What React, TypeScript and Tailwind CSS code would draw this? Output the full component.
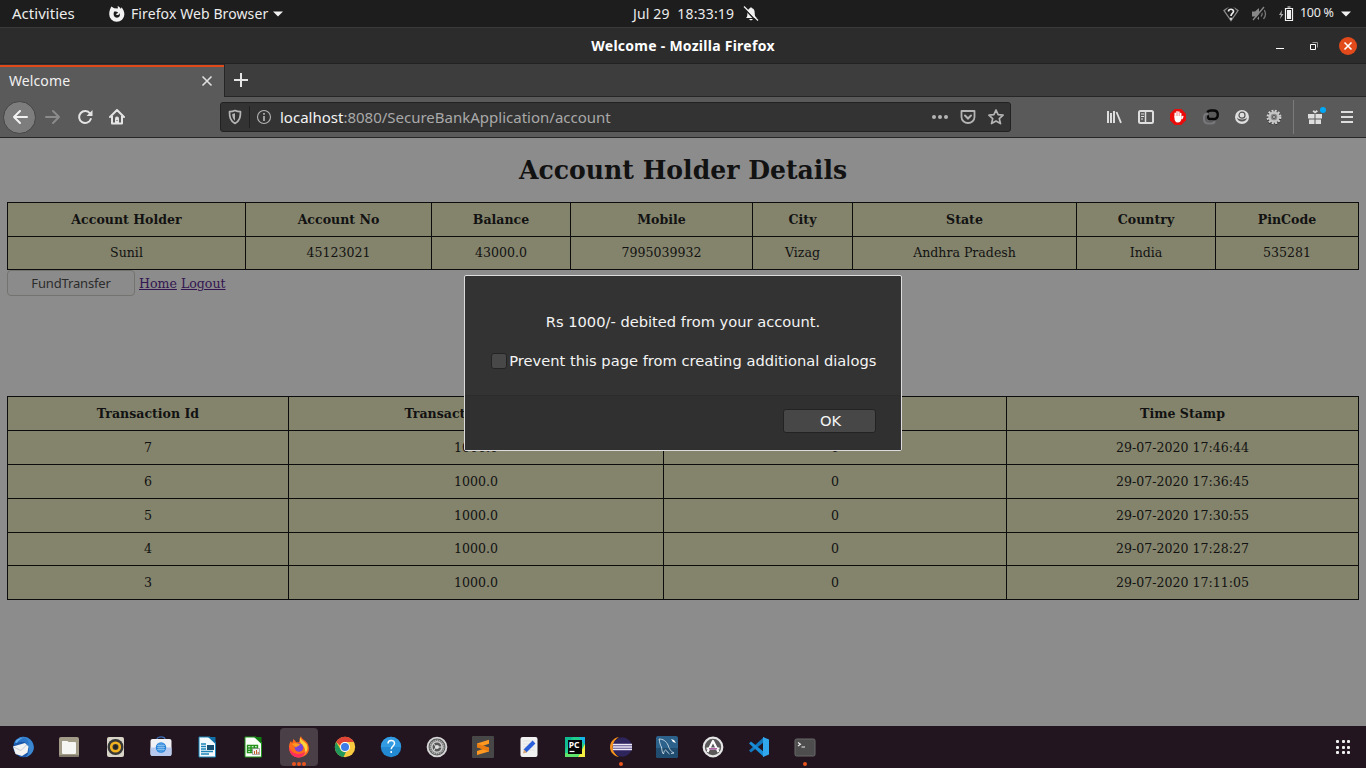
import React from "react";

type IconProps = { size?: number; box?: number; children: React.ReactNode; className?: string };

function Icon({ size = 16, box, children, className = "" }: IconProps) {
  const b = box ?? size;
  return (
    <svg width={size} height={size} viewBox={`0 0 ${b} ${b}`} fill="none" className={`shrink-0 ${className}`}>
      {children}
    </svg>
  );
}

function TopBar() {
  return (
    <header className="flex h-[28px] shrink-0 items-center border-b border-[#3a3a3a] bg-[#1d1d1d] text-[14px] text-[#ececec]">
      <div className="flex w-[633px] items-center">
        <span className="ml-3 w-[96px] text-[15px] tracking-[0.03px]">Activities</span>
        <Icon size={18}>
          <path d="M6.2 3.2 3.4 1.6C2.4 3.6 1.2 6 1.2 9a7.600 7.600 0 0 0 15.200.3c0-3-1.400-5.600-3.200-7.100l-.2 1.800C12 2.600 11.300 1.300 9.500.900c.5 1 .4 1.900.2 2.700z" fill="#f2f2f2" />
          <path d="M6 6.800c2-.8 2.500.4 4 .4-.2 1.200-1.500 1.300-2 2 .8 1.500 3.400 1.100 3.500-1.200 1.200 2.600-.3 4.700-2.500 4.700-2.600 0-4.100-2.400-3-5.900z" fill="#1d1d1d" />
        </Icon>
        <span className="ml-[5px] tracking-[0.1px]">Firefox Web Browser</span>
        <Icon size={10} className="ml-[5px]"><path d="M0 2.500h10L5 7.500z" fill="#f2f2f2" /></Icon>
      </div>
      <div className="flex w-[590px] items-center whitespace-pre">
        <span className="w-[102px] tracking-[0.16px]">Jul 29  18:33:19</span>
        <Icon size={16} className="ml-[8px]">
          <path d="M3 12c1.500-1.200 1.300-3 1.400-5C4.600 4 6 2.300 7.200 2 7.300.900 8.700.900 8.800 2 11 2.500 11.700 4.500 11.700 7c.1 2.500.3 3.800 2 5zM6.200 13h3.600c-.4 1.700-3.200 1.700-3.600 0z" fill="#f2f2f2" />
          <path d="m1 2 13 14" stroke="#1d1d1d" strokeWidth="1.500" />
          <path d="m1 .5 14 14" stroke="#f2f2f2" strokeWidth="1.200" />
        </Icon>
      </div>
      <div className="flex items-center text-[12.500px]">
        <Icon size={16}>
          <path d="M1 4.500c4-3.800 10-3.800 14 0L8 14.500z" stroke="#8a8a8a" strokeWidth="1.300" />
          <path d="M5.200 5.500C5.300 1.800 11 2 10.700 5.500 10.400 7.500 8 7.400 8 10" stroke="#1d1d1d" strokeWidth="4" />
          <path d="M5.500 5.500C5.500 2.500 10.700 2.500 10.500 5.500 10.300 7.500 8 7.400 8 10M8 11.800v2" stroke="#eee" strokeWidth="1.700" />
        </Icon>
        <Icon size={16} className="ml-[12px]">
          <path d="M1 5.500h3L8 2v12L4 10.500H1z" fill="#888" />
          <path d="M10 5.500c1.200 1.400 1.200 3.600 0 5M12.500 3c2.400 3 2.400 7 0 10" stroke="#777" strokeWidth="1.300" />
          <path d="m3 15 11-13" stroke="#1d1d1d" strokeWidth="1.500" /><path d="m2 14 11-13" stroke="#888" strokeWidth="1.300" />
        </Icon>
        <Icon size={16} className="ml-[11px]">
          <path d="M4 4 1 9h2l-1 4 3.500-5h-2z" fill="#aaa" />
          <path d="M7.500 2.500h7v12h-7zM9.500 1h3" stroke="#f2f2f2" strokeWidth="1.200" /><path d="M9 4h4v9H9z" fill="#f2f2f2" />
        </Icon>
        <span className="ml-[6px] w-[34px] whitespace-nowrap tracking-[-0.3px]">100 %</span>
        <Icon size={10} className="ml-[7px]"><path d="M0 2.500h10L5 7.500z" fill="#f2f2f2" /></Icon>
      </div>
    </header>
  );
}

function TitleBar() {
  return (
    <div className="grid h-[36px] shrink-0 grid-cols-[1fr_auto_1fr] items-center border-b border-[#222] bg-[#2c2c2c]">
      <span />
      <span className="text-[14px] font-bold tracking-[0.26px] text-white">Welcome - Mozilla Firefox</span>
      <div className="flex items-center justify-end pr-[9px]">
        <Icon size={10} className="mr-[24px]"><path d="M1 7h8v1H1z" fill="#fff" /></Icon>
        <Icon size={10} className="mr-[20px]">
          <path d="M3.500 1.500h5v5" stroke="#999" /><path d="M1.500 3.500h5v5h-5z" stroke="#fff" />
        </Icon>
        <Icon size={18}>
          <circle cx="9" cy="9" r="9" fill="#e24a1b" /><path d="m5.500 5.500 7 7m0-7-7 7" stroke="#fff" strokeWidth="1.600" />
        </Icon>
      </div>
    </div>
  );
}

function TabStrip() {
  return (
    <div className="flex h-[33px] shrink-0 bg-[#3d3d3d]">
      <div className="flex w-[224px] items-center justify-between bg-[#5a5a5a] pr-[11px] pl-[9px] shadow-[inset_0_1px_0_#333,inset_0_3px_0_#e24a1b]">
        <span className="text-[14px] tracking-[0.1px] text-[#f0f0f0]">Welcome</span>
        <Icon size={12}><path d="m1.500 1.500 9 9m0-9-9 9" stroke="#e0e0e0" strokeWidth="1.600" /></Icon>
      </div>
      <div className="flex flex-1 items-center border-b border-l border-[#262626] pl-[8px]">
        <Icon size={16}><path d="M8 1v14M1 8h14" stroke="#e6e6e6" strokeWidth="2" /></Icon>
      </div>
    </div>
  );
}

function NavBar() {
  return (
    <div className="flex h-[41px] shrink-0 items-center border-b border-[#262626] bg-[#5a5a5a]">
      <div className="flex w-[220px] items-center pl-[3px]">
        <span className="flex size-[33px] items-center justify-center rounded-full border border-[#454545] bg-[#7d7d7d]">
          <Icon><path d="M15 8H2m6-6L2 8l6 6" stroke="#f2f2f2" strokeWidth="2" strokeLinecap="round" strokeLinejoin="round" /></Icon>
        </span>
        <Icon className="ml-[9px]"><path d="M1 8h13M8 2l6 6-6 6" stroke="#8b8b8b" strokeWidth="2" strokeLinecap="round" strokeLinejoin="round" /></Icon>
        <Icon className="ml-[16px]">
          <path d="M13 4.500A6 6 0 1 0 13.800 10" stroke="#e4e4e4" strokeWidth="2" strokeLinecap="round" /><path d="M15.500 1v6h-6z" fill="#e4e4e4" />
        </Icon>
        <Icon className="ml-[16px]">
          <path d="m1 8 7-7 7 7M3 7v7.500h10V7" stroke="#e4e4e4" strokeWidth="2" strokeLinecap="round" strokeLinejoin="round" />
          <path d="M6 14V9.500a2 2 0 0 1 4 0V14z" fill="#e4e4e4" /><path d="M7.500 11h1v1h-1z" fill="#555" />
        </Icon>
      </div>
      <div className="flex h-[30px] w-[791px] items-center rounded-[3px] border border-[#222] bg-[#333] pl-[6px]">
        <Icon>
          <path d="M8 1.500c2 1 3.700 1.200 5.500 1.200 0 5-.5 9-5.500 11.800C3 11.700 2.500 7.700 2.500 2.700 4.300 2.700 6 2.500 8 1.500z" stroke="#b4b4b4" strokeWidth="1.700" strokeLinejoin="round" />
          <path d="M8 4.200v7.500C5.700 9.700 5.300 7.600 5.200 5z" fill="#b4b4b4" />
        </Icon>
        <span className="ml-[6px] h-[22px] w-px bg-[#202020]" />
        <Icon className="ml-[6px]">
          <circle cx="8" cy="8" r="6.500" stroke="#b4b4b4" strokeWidth="1.100" /><path d="M8 4v1.700M8 7v5" stroke="#b4b4b4" strokeWidth="1.700" />
        </Icon>
        <span className="ml-[8px] flex-1 text-[15px] text-[#a9a9a9]"><span className="text-[#f4f4f4]">localhost</span>:8080/SecureBankApplication/account</span>
        <Icon><circle cx="2" cy="8" r="2" fill="#b4b4b4" /><circle cx="8" cy="8" r="2" fill="#b4b4b4" /><circle cx="14" cy="8" r="2" fill="#b4b4b4" /></Icon>
        <Icon className="ml-[12px]">
          <path d="M1.500 2h13v6a6.500 6 0 0 1-13 0z" stroke="#b4b4b4" strokeWidth="1.800" strokeLinejoin="round" />
          <path d="m5 6.500 3 3 3-3" stroke="#b4b4b4" strokeWidth="2" strokeLinecap="round" />
        </Icon>
        <Icon className="mr-[6px] ml-[12px]">
          <path d="m8 1 2.100 4.700 5 .5-3.800 3.400 1.200 5L8 12l-4.500 2.600 1.200-5L.900 6.200l5-.5z" stroke="#b4b4b4" strokeWidth="1.700" strokeLinejoin="round" />
        </Icon>
      </div>
      <div className="flex flex-1 items-center justify-end pr-[11px]">
        <Icon className="mr-[16px]"><path d="M1 2h2v12H1zM4 4h2v10H4zM7 2h2v12H7z" fill="#dedede" /><path d="m10.500 3 4.500 10.800" stroke="#dedede" strokeWidth="1.800" /></Icon>
        <Icon className="mr-[16px]">
          <rect x="1" y="2" width="14" height="12" rx="1.500" stroke="#dedede" strokeWidth="2" /><path d="M7.500 2v12" stroke="#dedede" strokeWidth="1.500" />
          <path d="M3 5h3M3 7.500h3M3 10h2" stroke="#dedede" />
        </Icon>
        <Icon className="mr-[17px]">
          <path d="M4.700 0h6.600L16 4.700v6.600L11.300 16H4.700L0 11.300V4.700z" fill="#ea0b0b" />
          <path d="M5.200 8V4.200M7 7.500V2.800M8.900 7.500V3M10.700 8V4.500M12 9.500l.8-2" stroke="#fff" strokeWidth="1.500" strokeLinecap="round" />
          <path d="M4.500 7h7v2.500c-.4 2.700-1.500 4-3.700 4-2.200 0-3.300-2-3.300-4z" fill="#fff" />
        </Icon>
        <Icon className="mr-[15px]">
          <path d="M5 4.800C1.500 4.800 1 6 1 9.500s1 5 4.500 5h3c2 0 3-1 3-2.500M4 10.500h6" stroke="#77777b" strokeWidth="2.200" />
          <path d="M4.500 3.500C5 1.800 6.500 1.500 8 1.500h2.500c3 0 4.300 1.500 4.300 4.200s-1.300 4.300-4.300 4.300H6.500C5 10 4.500 7.500 6 7" stroke="#080808" strokeWidth="2.400" />
        </Icon>
        <Icon className="mr-[16px]">
          <circle cx="8" cy="8" r="7" fill="#dedede" /><path d="M3 8.500c.5 5.300 9.500 5.300 10 0-1.500 2.600-8.500 2.600-10 0z" fill="#555" />
          <circle cx="8" cy="6.200" r="3" fill="#dedede" stroke="#555" strokeWidth="1.200" />
        </Icon>
        <Icon className="mr-[11px]">
          <circle cx="8" cy="9" r="6.200" stroke="#333" strokeWidth="2.200" strokeDasharray="1.900 1.350" />
          <circle cx="8" cy="8" r="6.200" stroke="#d0d0d0" strokeWidth="2.400" strokeDasharray="1.900 1.350" />
          <circle cx="8" cy="8" r="5.700" fill="#c4c4c4" /><circle cx="8" cy="8" r="3.300" fill="#8a8a8a" /><circle cx="8" cy="8" r="1.900" fill="#555" /><circle cx="8" cy="8" r="1" fill="#bbb" />
        </Icon>
        <span className="mr-[12px] h-[34px] w-px bg-[#7b7b7b]" />
        <Icon size={20} className="mr-[13px]">
          <path d="M2 7h6.500v4.500H2zM9.500 7H16v4.500H9.500zM3 12.500h5.500V17H3zM9.500 12.500H15V17H9.500z" fill="#dedede" />
          <path d="M9 6.500 6.500 4.500 8 3l1 1.500L10.500 3 12 4.500z" fill="#dedede" /><circle cx="17" cy="3" r="3" fill="#00a8f5" />
        </Icon>
        <Icon><path d="M2 3h12M2 8h12M2 13h12" stroke="#dedede" strokeWidth="2" /></Icon>
      </div>
    </div>
  );
}

const account: [string, string][] = [
  ["Account Holder", "Sunil"], ["Account No", "45123021"], ["Balance", "43000.0"], ["Mobile", "7995039932"],
  ["City", "Vizag"], ["State", "Andhra Pradesh"], ["Country", "India"], ["PinCode", "535281"],
];

const transactions = [
  ["7", "1000.0", "0", "29-07-2020 17:46:44"],
  ["6", "1000.0", "0", "29-07-2020 17:36:45"],
  ["5", "1000.0", "0", "29-07-2020 17:30:55"],
  ["4", "1000.0", "0", "29-07-2020 17:28:27"],
  ["3", "1000.0", "0", "29-07-2020 17:11:05"],
];

function Cell({ children, head }: { children?: React.ReactNode; head?: boolean }) {
  return <div className={`flex items-center justify-center border-r border-b border-[#0c0c0c] pt-px whitespace-nowrap ${head ? "font-bold" : ""}`}>{children}</div>;
}

function Page() {
  return (
    <main className="relative flex flex-1 flex-col bg-[#8c8c8c] px-[7px] font-['DejaVu_Serif',serif] text-[12.570px] text-[#121212]">
      <h1 className="flex h-[64px] items-center justify-center pt-[2px] text-[25.140px] font-bold">Account Holder Details</h1>
      <div className="grid grid-cols-[238px_186px_139px_182px_100px_224px_139px_143px] grid-rows-[34px_33px] border-t border-l border-[#0c0c0c] bg-[#84846c]">
        {account.map(([h]) => <Cell key={h} head>{h}</Cell>)}
        {account.map(([h, v]) => <Cell key={h}>{v}</Cell>)}
      </div>
      <div className="flex h-[126px] items-start gap-1">
        <button className="h-[26px] w-[128px] rounded-[4px] border border-[#73736f] bg-[#8b8b8b] pt-px font-['Noto_Sans',sans-serif] text-[13px] tracking-[-0.15px] text-[#2c2c2c]">FundTransfer</button>
        <a className="leading-[28px] text-[#321550] underline">Home</a>
        <a className="leading-[28px] text-[#321550] underline">Logout</a>
      </div>
      <div className="grid grid-cols-[281px_375px_343px_352px] grid-rows-[34px_34px_34px_34px_33px_34px] border-t border-l border-[#0c0c0c] bg-[#84846c]">
        <Cell head>Transaction Id</Cell>
        <Cell head>Transaction Amount</Cell>
        <Cell head />
        <Cell head>Time Stamp</Cell>
        {transactions.flatMap((r) => r.map((v, i) => <Cell key={r[0] + i}>{v}</Cell>))}
      </div>
      <Dialog />
    </main>
  );
}

function Dialog() {
  return (
    <div className="absolute top-[137px] left-[464px] flex h-[176px] w-[438px] flex-col rounded-[2px] border border-[#dcdcdc] bg-[#333] font-['DejaVu_Sans',sans-serif] text-[14.667px] text-[#f4f4f4]">
      <div className="flex h-[119px] flex-col items-center pt-[36px] leading-[20px]">
        <p>Rs 1000/- debited from your account.</p>
        <label className="mt-[19px] ml-px flex items-center gap-[2.500px] whitespace-nowrap">
          <span className="size-[16px] rounded-[3px] border border-[#242424] bg-[#484848]" />
          <span className="tracking-[0.01px]">Prevent this page from creating additional dialogs</span>
        </label>
      </div>
      <div className="flex flex-1 justify-end border-t border-[#2c2c2c] bg-[#303030] pt-[13px] pr-[25px]">
        <button className="h-[24px] w-[93px] rounded-[3px] border border-[#232323] bg-[#474747] pl-[2px] leading-[22px]">OK</button>
      </div>
    </div>
  );
}

const dock: { name: string; art: React.ReactNode; running?: boolean; active?: boolean }[] = [
  { name: "mail", art: <>
    <circle cx="11.500" cy="11" r="10.300" fill="#1c56a8" /><path d="M7 1.500C14-1.500 22 4 21.800 12c-.5 5-4 8-8.300 9.300C19 16 18 7 7 1.500z" fill="#3a86d0" />
    <path d="M1 10.500 13 7l3.500 3.500-1 6L10 20l-6.500-2z" fill="#f3f3f3" /><path d="m1.500 11 7.500 3.500L14.500 9" stroke="#b8c0cc" strokeWidth=".8" /><path d="M2 8C3 3 7 1 12 2c4 1.500 5 4 5 7-3-4-9-4-15-1z" fill="#2b75c8" /><path d="M3 6C5 2.500 8 1.500 11 2.500 8 3 6 4.500 5 7z" fill="#65b0f0" /></> },
  { name: "files", art: <>
    <rect x="1" y="1" width="20" height="20" rx="2" fill="#a29b88" /><rect x="1" y="19" width="20" height="2" rx="1" fill="#7f786a" />
    <path d="M4 5.500Q4 5 4.500 5h5l1 1h6.500q1 0 1 1V17q0 1-1 1H5q-1 0-1-1z" fill="#f5f5f3" /></> },
  { name: "music", art: <>
    <rect x="3" y="1" width="17" height="20" rx="2" fill="#d9d4c8" /><circle cx="11.500" cy="11" r="8" fill="#383838" />
    <circle cx="11.500" cy="11" r="4.300" stroke="#f0b21f" strokeWidth="2.600" /><circle cx="11.500" cy="11" r="2" fill="#222" /></> },
  { name: "store", art: <>
    <path d="M7 3.500c0-3.500 8-3.500 8 0" stroke="#3d6eb8" strokeWidth="1.400" /><rect x=".5" y="3" width="21" height="17" rx="2" fill="#f0f1f4" /><path d="M.5 11.500h21V18q0 2-2 2h-17q-2 0-2-2z" fill="#b7c9ef" />
    <circle cx="11" cy="11.500" r="5.200" fill="#2583d8" /><path d="M7 9.500h8M7 11.500h8M7 13.500h8M9 7.500v8M11 7v9M13 7.500v8" stroke="#a9d2f6" strokeWidth=".6" /></> },
  { name: "writer", art: <>
    <path d="M3 1h11l5.500 5.500V21H3z" fill="#f4fafd" stroke="#1c84b8" /><path d="M12 1h7.500v7z" fill="#0f6fa6" />
    <path d="M5 8h5M5 10.500h5M5 13h5M5 15.500h12M5 18h8" stroke="#1c84b8" strokeWidth="1.300" /><path d="M11 9h7v5h-7z" fill="#174f73" /></> },
  { name: "calc", art: <>
    <path d="M3 1h11l5.500 5.500V21H3z" fill="#fbfff9" stroke="#21931b" /><path d="M12 1h7.500v7z" fill="#107c10" />
    <path d="M5.500 9.500h10v7h-10zM5.500 12h10M5.500 14.300h10M9 9.500v7M12.300 9.500v7" stroke="#21931b" strokeWidth="1.400" /><path d="M10.500 12.500h7v6h-7z" fill="#f0f0f0" stroke="#777" strokeWidth=".6" /><path d="M12.500 18v-3M14.500 18v-4M16.200 18v-2" stroke="#c2602a" /></> },
  { name: "firefox", active: true, art: <>
    <path d="M1 11c0-3 1-5 2-6l1 2c1-1.500 1-2 1-4 1.500.8 2.500 2 3 3.300h3c1-2 .3-4 2-6.300.5 3 4 4 6 6.500.8 1 1 1.500 1.500 3.500C22.500 17 17 21.500 11 21.500S1 17 1 11z" fill="#ff6a1c" />
    <path d="M12 1c.5 3 4 4 6.500 7 3 5-1 11-5 12 5-4 4-8 1-10.500C12 7 11.500 4 12 1z" fill="#ffd43a" /><path d="M1 11c1 2 2 4.500 5 6 4 2 9 1 12-2-1.500 4-4 6.500-7.500 6.500C5 21.500 1 17 1 11z" fill="#ff2e5f" />
    <circle cx="11" cy="11.500" r="4.300" fill="#7a45d6" /><path d="M4 8c3-1.500 5 0 8 0-.5 2-3 2-4 3.500z" fill="#ff9a20" /></> },
  { name: "chrome", art: <>
    <circle cx="11" cy="11" r="10.200" fill="#f9c940" /><path d="M2.170 5.900A10.200 10.200 0 0 1 19.830 5.900H11a5.100 5.100 0 0 0-4.800 3.800z" fill="#df4436" />
    <path d="M2.170 5.900 6.600 13.550A5.100 5.100 0 0 0 12 16L9.500 21.100A10.200 10.200 0 0 1 2.170 5.900z" fill="#22995a" /><circle cx="11" cy="11" r="5" fill="#fff" /><circle cx="11" cy="11" r="4" fill="#3e7ce8" /></> },
  { name: "help", art: <>
    <circle cx="11" cy="11" r="10.200" fill="#2389d2" /><path d="M.8 11a10.200 10.200 0 0 1 20.400 0z" fill="#339be2" />
    <path d="M8 7.500c0-4 6.500-4 6.500-.3 0 3-3.300 3-3.300 6M11.200 15v2" stroke="#fff" strokeWidth="1.500" /></> },
  { name: "settings", art: <>
    <circle cx="11" cy="11" r="9.400" fill="#575757" stroke="#d6d6d6" strokeWidth="1.900" /><circle cx="11" cy="11" r="6.800" stroke="#a8a8a8" strokeWidth="1.400" strokeDasharray="1.600 .5" />
    <circle cx="11" cy="11" r="5.200" stroke="#cfcfcf" strokeWidth="1.500" /><circle cx="11" cy="11" r="2" fill="#ddd" /><path d="M10 11 7.500 7.500M12 11h4M10 11l-2.500 4" stroke="#ddd" /></> },
  { name: "sublime", art: <>
    <rect width="22" height="22" rx="1" fill="#474747" /><path d="m5 7.500 12-3.700v4L11 9.700l6 2v3.800L5 19v-4l6-2-6-1.800z" fill="#ff9820" /><path d="m5 7.500 12 4.200v3.800L5 11.200z" fill="#e97b10" /></> },
  { name: "editor", art: <>
    <rect x="2.500" y="1" width="17" height="20" rx="2" fill="#f1f1f1" /><path d="M5 5h12M5 8h12M5 11h12M5 14h12" stroke="#dadada" strokeWidth=".7" />
    <path d="m7 15 9-9" stroke="#2b5fd9" strokeWidth="4" /><path d="m5 17.500 1-4 3 3z" fill="#d5a376" /></> },
  { name: "pycharm", art: <>
    <path d="M1 1h20v20H1z" fill="#20cf90" /><path d="M1 1h8L1 14z" fill="#10bb91" /><path d="M15 1h6v8z" fill="#15b4e8" /><path d="M21 8v13h-7z" fill="#f4ee43" /><path d="M1 21h12l4-4H1z" fill="#5ee66c" />
    <path d="M4 4h14v14H4z" fill="#070707" /><path d="M5.500 15.500h5" stroke="#fff" strokeWidth="1.200" />
    <text x="4.700" y="11.500" fill="#fff" fontSize="8.500" fontWeight="bold" fontFamily="Noto Sans, sans-serif">PC</text></> },
  { name: "eclipse", running: true, art: <>
    <path d="M9 1C-3 3-3 19 9 21 1 16 1 6 9 1z" fill="#f6921e" /><circle cx="12.300" cy="11" r="9.700" fill="#2e255c" /><path d="M3 7.500h19v7H3z" fill="#8177a8" /><path d="M3 8.500h19M3 13.500h19" stroke="#eeeaf5" strokeWidth="1" /><path d="M3 11h19" stroke="#c8c1dc" strokeWidth="2" /></> },
  { name: "mysql", art: <>
    <rect width="22" height="22" rx="2" fill="#2c618b" /><path d="M0 12h22v8q0 2-2 2H2q-2 0-2-2z" fill="#204c70" />
    <path d="M3 3c4 0 7 2 9 6 1 3 2 6 6 8l-3 .5M3 3c1 4 1 6 2.500 8 .5 3 .5 6 2 7 .5-2 .5-3 2-4 2 1 2 3 4 4" stroke="#e2edf3" strokeWidth=".8" /><path d="m15 3 3 1 2 3-3-1z" fill="#fff" /></> },
  { name: "updater", art: <>
    <circle cx="11" cy="11" r="9.300" fill="#5a5859" stroke="#e6e6e6" strokeWidth="2.200" /><path d="m5.500 16 5.500-11 5.500 11" stroke="#fff" strokeWidth="2.200" strokeLinejoin="round" /><path d="M4.500 12.500h13" stroke="#fff" strokeWidth="2" /><path d="M7 12.800h8" stroke="#a74a9a" strokeWidth="1.300" /></> },
  { name: "code", art: <>
    <path d="m1 14.500 2 2L16 6V1z" fill="#1377bd" /><path d="m1 7.500 2-2 13 10.500v5z" fill="#198dd7" /><path d="m15 1 6 2.500v15L15 21z" fill="#31a8ed" /></> },
  { name: "terminal", running: true, art: <>
    <rect x="1" y="3" width="20" height="17" rx="1.500" fill="#4d4d4d" stroke="#686868" /><path d="m4 6.500 2.500 1.700L4 10M7.500 11h3.500" stroke="#eee" strokeWidth="1.100" /></> },
];

function Dock() {
  return (
    <footer className="flex h-[42px] shrink-0 items-center bg-[#22151f]">
      {dock.map((d) => (
        <div key={d.name} className="flex w-[46px] justify-center">
          <div className={`relative flex h-[38px] w-[38px] items-center justify-center rounded-[4px] ${d.active ? "bg-[#4a3e47]" : ""}`}>
            <Icon size={22}>{d.art}</Icon>
            {(d.running || d.active) && (
              <span className="absolute bottom-0 flex gap-[1px]">
                {(d.active ? [0, 1, 2] : [0]).map((i) => <i key={i} className="size-[4px] rounded-full bg-[#e9541f]" />)}
              </span>
            )}
          </div>
        </div>
      ))}
      <div className="grid flex-1 grid-cols-[3px_3px_3px] justify-end gap-[2.500px] pr-[16px]">
        {Array.from({ length: 9 }, (_, i) => <i key={i} className="size-[3px] rounded-[1px] bg-[#f0f0f0]" />)}
      </div>
    </footer>
  );
}

export default function App() {
  return (
    <div className="flex h-[768px] w-[1366px] flex-col overflow-hidden bg-[#8c8c8c] font-['Noto_Sans',sans-serif]">
      <TopBar />
      <TitleBar />
      <TabStrip />
      <NavBar />
      <Page />
      <Dock />
    </div>
  );
}
